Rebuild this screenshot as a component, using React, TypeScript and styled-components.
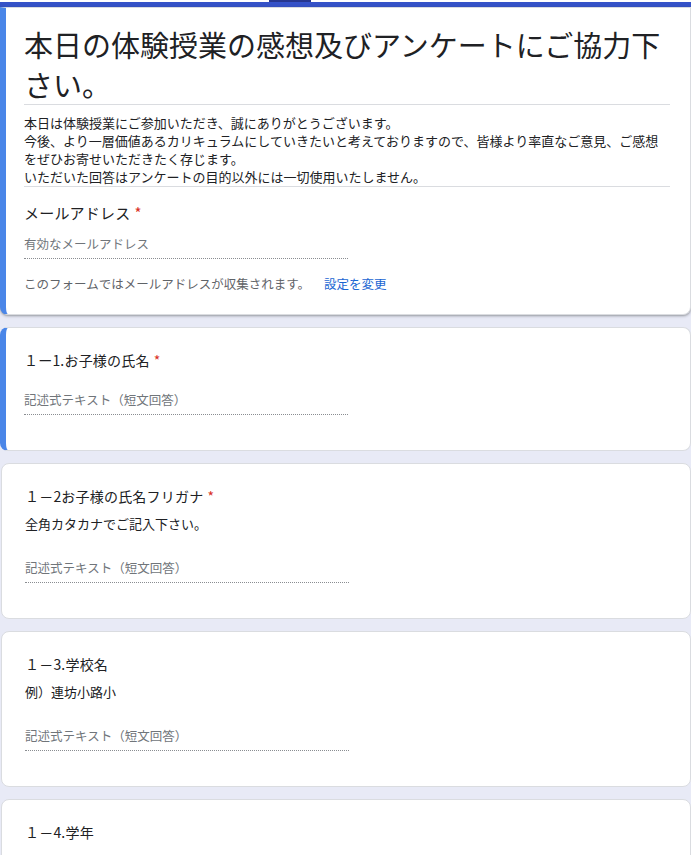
import React from "react";
import styled, { createGlobalStyle } from "styled-components";

const GlobalStyle = createGlobalStyle`
  html, body {
    margin: 0;
    padding: 0;
    background: #e8eaf6;
    font-family: "Noto Sans CJK JP", "Noto Sans", sans-serif;
    color: #202124;
  }
`;

const Page = styled.main`
  width: 691px;
  display: flex;
  flex-direction: column;
  gap: 12px;
  padding-bottom: 40px;
`;

const TopStrip = styled.div`
  height: 2px;
  background: #ffffff;
  display: flex;
  padding-left: 269px;
`;

const Tab = styled.div`
  width: 42px;
  height: 2px;
  background: #27378f;
`;

const HeaderWrap = styled.div`
  display: flex;
  flex-direction: column;
  margin-top: -12px;
`;

const Card = styled.section<{ $selected?: boolean; $header?: boolean }>`
  margin-left: 1px;
  width: 690px;
  box-sizing: border-box;
  background: #ffffff;
  border: 1px solid #dadce0;
  border-radius: ${(p) => (p.$header ? "0 0 8px 8px" : "8px")};
  padding: 0 20px 0 23px;
  box-shadow: ${(p) =>
    p.$header ? "0 1px 2px 0 rgba(60,64,67,.35), 0 1px 3px 1px rgba(60,64,67,.12)" : "none"};
  ${(p) =>
    p.$selected &&
    `
    border-left: 6px solid #4a86e8;
    margin-left: 0;
    width: 691px;
    padding-left: 18px;
  `}
`;

const TopBar = styled.div`
  height: 5px;
  background: #3552c8;
`;

const Title = styled.h1`
  margin: 0;
  padding: 16px 0 0;
  font-size: 29px;
  line-height: 40px;
  font-weight: 400;
  border-bottom: 1px solid #dadce0;
`;

const Description = styled.div`
  padding: 9px 0 0;
  font-size: 13px;
  line-height: 18px;
  border-bottom: 1px solid #dadce0;
  white-space: pre-wrap;
`;

const EmailBlock = styled.div`
  padding: 15px 0 20px;
`;

const Label = styled.div<{ $big?: boolean }>`
  font-size: ${(p) => (p.$big ? "15px" : "14px")};
  line-height: 22px;
  letter-spacing: 0.2px;
`;

const Star = styled.span`
  color: #d93025;
  margin-left: 4px;
`;

const Hint = styled.div`
  font-size: 13px;
  line-height: 18px;
  margin-top: 8px;
`;

const Input = styled.div`
  width: 324px;
  font-size: 12.5px;
  line-height: 22px;
  color: #70757a;
  padding-bottom: 3px;
  border-bottom: 1px dotted #8a8d91;
`;

const Note = styled.div`
  margin-top: 15px;
  font-size: 12.5px;
  line-height: 20px;
  color: #5f6368;
`;

const Link = styled.span`
  color: #1a66d2;
  margin-left: 14px;
`;

const QuestionBody = styled.div<{ $hasHint?: boolean }>`
  padding: 21px 0 35px;
  display: flex;
  flex-direction: column;
  & > ${Input} {
    margin-top: ${(p) => (p.$hasHint ? "24px" : "18px")};
  }
`;

const questions = [
  { title: "１ー1.お子様の氏名", required: true, selected: true },
  { title: "１－2お子様の氏名フリガナ", required: true, hint: "全角カタカナでご記入下さい。" },
  { title: "１－3.学校名", hint: "例）連坊小路小" },
  { title: "１－4.学年" },
];

export default function App() {
  return (
    <>
      <GlobalStyle />
      <Page>
        <TopStrip>
          <Tab />
        </TopStrip>
        <HeaderWrap>
          <TopBar />
          <Card $header $selected>
            <Title>本日の体験授業の感想及びアンケートにご協力下さい。</Title>
            <Description>
              本日は体験授業にご参加いただき、誠にありがとうございます。{"\n"}
              今後、より一層価値あるカリキュラムにしていきたいと考えておりますので、皆様より率直なご意見、ご感想をぜひお寄せいただきたく存じます。{"\n"}
              いただいた回答はアンケートの目的以外には一切使用いたしません。
            </Description>
            <EmailBlock>
              <Label $big>
                メールアドレス<Star>*</Star>
              </Label>
              <Input style={{ marginTop: 9 }}>有効なメールアドレス</Input>
              <Note>
                このフォームではメールアドレスが収集されます。<Link>設定を変更</Link>
              </Note>
            </EmailBlock>
          </Card>
        </HeaderWrap>
        {questions.map((q, i) => (
          <Card key={i} $selected={q.selected}>
            <QuestionBody $hasHint={!!q.hint}>
              <Label>
                {q.title}
                {q.required && <Star>*</Star>}
              </Label>
              {q.hint && <Hint>{q.hint}</Hint>}
              <Input>記述式テキスト（短文回答）</Input>
            </QuestionBody>
          </Card>
        ))}
      </Page>
    </>
  );
}
